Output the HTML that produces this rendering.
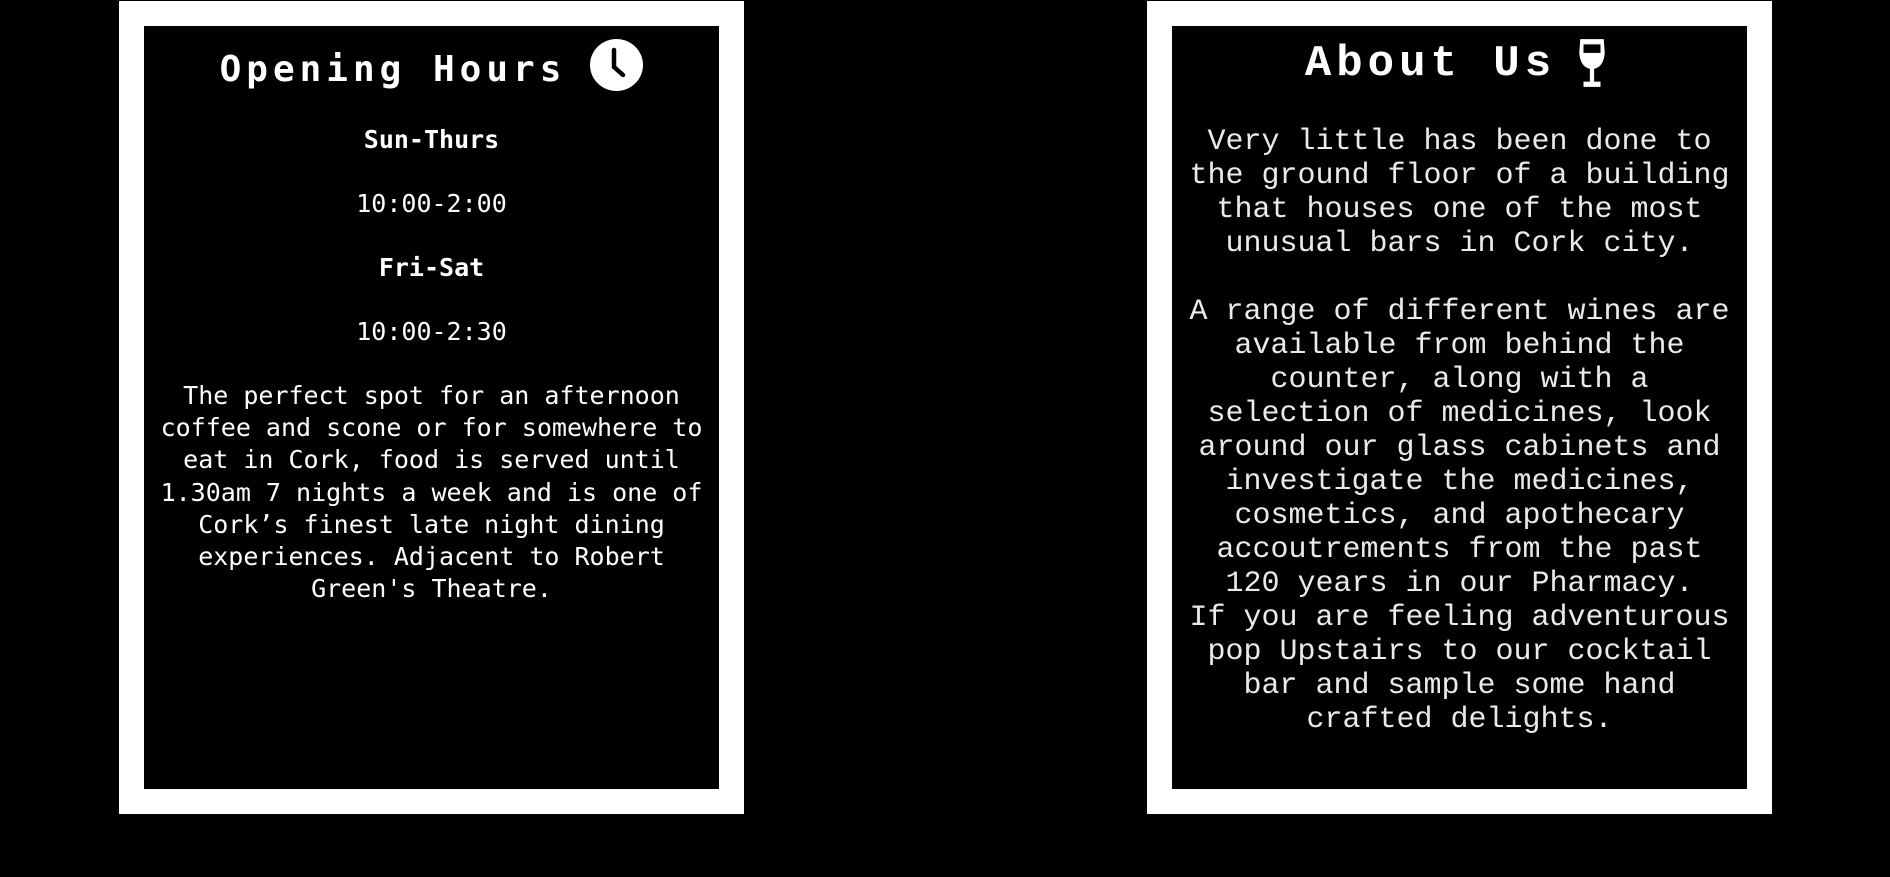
<!DOCTYPE html>
<html><head><meta charset="utf-8"><style>
html,body{margin:0;padding:0;background:#000;width:1890px;height:877px;overflow:hidden;position:relative}
.box{position:absolute;top:1px;width:575px;height:763px;border:25px solid #fff;background:#000;color:#fff;text-align:center}
.l{left:119px;font-family:"DejaVu Sans Mono","Liberation Mono",monospace}
.r{left:1147px;font-family:"Liberation Mono",monospace;color:#eaeaea}
.a{position:absolute;left:0;right:0;margin:0;white-space:nowrap}
</style></head><body>
<div class="box l">
 <div class="a" style="top:13px;height:60px;display:flex;justify-content:center;align-items:center;">
  <span style="font-size:36px;letter-spacing:5px;font-weight:bold">Opening Hours</span>
  <svg width="53" height="52" viewBox="0 0 53 52" style="margin-left:24px;position:relative;top:-4px"><ellipse cx="26.5" cy="26" rx="26.5" ry="26" fill="#fff"/><path d="M24 11 V28 L33 36" stroke="#000" stroke-width="4.5" fill="none" stroke-linecap="round"/></svg>
 </div>
 <div class="a" style="top:98px;font-size:25px;line-height:32px;font-weight:bold">Sun-Thurs</div>
 <div class="a" style="top:162px;font-size:25px;line-height:32px">10:00-2:00</div>
 <div class="a" style="top:226px;font-size:25px;line-height:32px;font-weight:bold">Fri-Sat</div>
 <div class="a" style="top:290px;font-size:25px;line-height:32px">10:00-2:30</div>
 <div class="a" style="top:354px;font-size:25px;line-height:32.2px">The perfect spot for an afternoon<br>coffee and scone or for somewhere to<br>eat in Cork, food is served until<br>1.30am 7 nights a week and is one of<br>Cork’s finest late night dining<br>experiences. Adjacent to Robert<br>Green's Theatre.</div>
</div>
<div class="box r">
 <div class="a" style="top:10px;height:56px;display:flex;justify-content:center;align-items:center;color:#fff">
  <span style="font-size:44px;letter-spacing:5px;font-weight:bold;position:relative;left:-8px">About Us</span>
  <svg width="28" height="50" viewBox="0 0 26 47" style="margin-left:14px;position:relative;top:-1px"><path d="M2 1 H24 L25 14 Q24 27 15 29 V41 H21 V46 H5 V41 H11 V29 Q2 27 1 14 Z" fill="#fff"/><rect x="5" y="6" width="16" height="8" fill="#000"/></svg>
 </div>
 <div class="a" style="top:99px;font-size:30px;line-height:34px">Very little has been done to<br>the ground floor of a building<br>that houses one of the most<br>unusual bars in Cork city.<br><br>A range of different wines are<br>available from behind the<br>counter, along with a<br>selection of medicines, look<br>around our glass cabinets and<br>investigate the medicines,<br>cosmetics, and apothecary<br>accoutrements from the past<br>120 years in our Pharmacy.<br>If you are feeling adventurous<br>pop Upstairs to our cocktail<br>bar and sample some hand<br>crafted delights.</div>
</div>
</body></html>
